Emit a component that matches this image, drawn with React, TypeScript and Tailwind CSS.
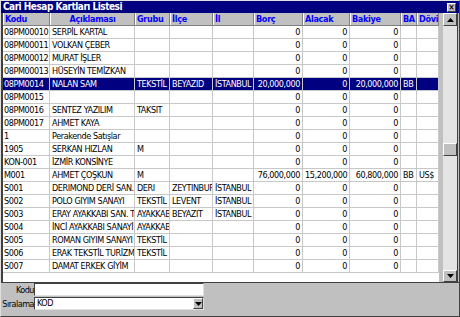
import React from "react";

const font = {
  fontFamily: '"DejaVu Sans Condensed", "Liberation Sans", sans-serif',
};

const cols = [
  { label: "Kodu", w: "w-[47px]", align: "left" },
  { label: "Açıklaması", w: "w-[85px]", align: "center" },
  { label: "Grubu", w: "w-[35px]", align: "left" },
  { label: "İlçe", w: "w-[43px]", align: "left" },
  { label: "İl", w: "w-[41px]", align: "left" },
  { label: "Borç", w: "w-[49px]", align: "left" },
  { label: "Alacak", w: "w-[47px]", align: "left" },
  { label: "Bakiye", w: "w-[51px]", align: "left" },
  { label: "BA", w: "w-[16px]", align: "left" },
  { label: "Dövi", w: "w-[22px]", align: "left" },
];

const rows: string[][] = [
  ["08PM00010", "SERPİL KARTAL", "", "", "", "0", "0", "0", "", ""],
  ["08PM00011", "VOLKAN ÇEBER", "", "", "", "0", "0", "0", "", ""],
  ["08PM00012", "MURAT İŞLER", "", "", "", "0", "0", "0", "", ""],
  ["08PM00013", "HÜSEYİN TEMİZKAN", "", "", "", "0", "0", "0", "", ""],
  ["08PM0014", "NALAN SAM", "TEKSTİL", "BEYAZID", "İSTANBUL", "20,000,000", "0", "20,000,000", "BB", ""],
  ["08PM0015", "", "", "", "", "0", "0", "0", "", ""],
  ["08PM0016", "SENTEZ YAZILIM", "TAKSIT", "", "", "0", "0", "0", "", ""],
  ["08PM0017", "AHMET KAYA", "", "", "", "0", "0", "0", "", ""],
  ["1", "Perakende Satışlar", "", "", "", "0", "0", "0", "", ""],
  ["1905", "SERKAN HIZLAN", "M", "", "", "0", "0", "0", "", ""],
  ["KON-001", "İZMİR KONSİNYE", "", "", "", "0", "0", "0", "", ""],
  ["M001", "AHMET ÇOŞKUN", "M", "", "", "76,000,000", "15,200,000", "60,800,000", "BB", "US$"],
  ["S001", "DERIMOND DERİ SAN.", "DERI", "ZEYTINBURNU", "İSTANBUL", "0", "0", "0", "", ""],
  ["S002", "POLO GIYIM SANAYI", "TEKSTİL", "LEVENT", "İSTANBUL", "0", "0", "0", "", ""],
  ["S003", "ERAY AYAKKABI SAN. TİC.", "AYAKKABI", "BEYAZIT", "İSTANBUL", "0", "0", "0", "", ""],
  ["S004", "İNCİ AYAKKABI SANAYİ", "AYAKKABI", "", "", "0", "0", "0", "", ""],
  ["S005", "ROMAN GIYIM SANAYI", "TEKSTİL", "", "", "0", "0", "0", "", ""],
  ["S006", "ERAK TEKSTİL TURİZM", "TEKSTİL", "", "", "0", "0", "0", "", ""],
  ["S007", "DAMAT ERKEK GİYİM", "", "", "", "0", "0", "0", "", ""],
];

const numCols = [5, 6, 7];

// small black arrow used in scroll / combo buttons
const Arrow = ({ up }: { up?: boolean }) => (
  <svg width="7" height="4" viewBox="0 0 7 4">
    {up ? <path d="M3.5 0 L7 4 L0 4 Z" fill="#000" /> : <path d="M0 0 L7 0 L3.5 4 Z" fill="#000" />}
  </svg>
);

const Btn3D = ({ children, className }: { children?: React.ReactNode; className: string }) => (
  <div
    className={`flex items-center justify-center bg-[#c0c0c0] border border-t-white border-l-white border-r-[#404040] border-b-[#404040] ${className}`}
  >
    {children}
  </div>
);

export default function App() {
  return (
    <div
      style={font}
      className="w-[460px] h-[317px] bg-[#c0c0c0] border border-t-[#dfdfdf] border-l-[#dfdfdf] border-r-[#404040] border-b-[#404040] flex flex-col overflow-hidden text-[9px] text-black"
    >
      {/* Title bar */}
      <div className="h-[12px] shrink-0 bg-[#000080] flex items-center justify-between pl-[2px] pr-[3px]">
        <span className="text-white font-bold text-[10px] tracking-[-0.5px] leading-[12px]">
          Cari Hesap Kartları Listesi
        </span>
        <Btn3D className="w-[9px] h-[9px]">
          <span className="text-[8px] leading-[7px] font-bold">×</span>
        </Btn3D>
      </div>

      {/* Grid */}
      <div className="h-[270px] shrink-0 flex border-l-2 border-l-[#404040] border-b border-b-[#404040]">
        <div className="w-[436px] flex flex-col bg-white">
          <div className="flex h-[13px] bg-[#c0c0c0] border-b border-b-[#808080] tracking-[-0.3px]">
            {cols.map((c) => (
              <div
                key={c.label}
                className={`${c.w} shrink-0 h-full border-l border-l-white border-r border-r-[#808080] px-[1px] font-bold text-[#0000ff] leading-[12px] overflow-hidden whitespace-nowrap ${
                  c.align === "center" ? "text-center" : "text-left"
                }`}
              >
                {c.label}
              </div>
            ))}
          </div>
          {rows.map((r, i) => {
            const sel = i === 4;
            return (
              <div key={i} className={`flex h-[13px] tracking-[-0.4px] ${sel ? "bg-[#000080] text-white" : ""}`}>
                {r.map((v, j) => (
                  <div
                    key={j}
                    className={`${cols[j].w} shrink-0 h-full border-r border-b border-[#c8c8c8] ${
                      j === 0 ? "pl-[1px]" : "px-[2px]"
                    } leading-[12px] overflow-hidden whitespace-nowrap ${
                      numCols.includes(j) ? "text-right" : "text-left"
                    }`}
                  >
                    {v}
                  </div>
                ))}
              </div>
            );
          })}
        </div>
        <div className="w-[4px] bg-[#c0c0c0]" />
        {/* Scrollbar */}
        <div className="w-[14px] flex flex-col bg-[#e4e4e4]">
          <Btn3D className="h-[13px] w-full">
            <Arrow up />
          </Btn3D>
          <div className="flex-1 flex flex-col">
            <div className="h-[117px]" />
            <Btn3D className="h-[13px] w-full" />
          </div>
          <Btn3D className="h-[12px] w-full">
            <Arrow />
          </Btn3D>
        </div>
        <div className="w-[2px] bg-[#c0c0c0] border-l border-l-[#404040]" />
      </div>

      {/* Bottom panel */}
      <div className="flex flex-col gap-[1px] text-[9px] tracking-[-0.5px]">
        <div className="flex items-center h-[13px]">
          <span className="w-[33px] text-right leading-[12px]">Kodu</span>
          <div className="w-[170px] h-[13px] bg-white border border-t-[#404040] border-l-[#404040] border-r-[#dfdfdf] border-b-[#dfdfdf]" />
        </div>
        <div className="flex items-center h-[13px]">
          <span className="w-[33px] text-right leading-[12px] whitespace-nowrap">Sıralama</span>
          <div className="w-[170px] h-[13px] bg-white border border-t-[#404040] border-l-[#404040] border-r-[#dfdfdf] border-b-[#dfdfdf] flex items-center justify-between">
            <span className="pl-[2px] leading-[11px] text-[9px]">KOD</span>
            <Btn3D className="w-[10px] h-[11px]">
              <Arrow />
            </Btn3D>
          </div>
        </div>
      </div>
    </div>
  );
}
